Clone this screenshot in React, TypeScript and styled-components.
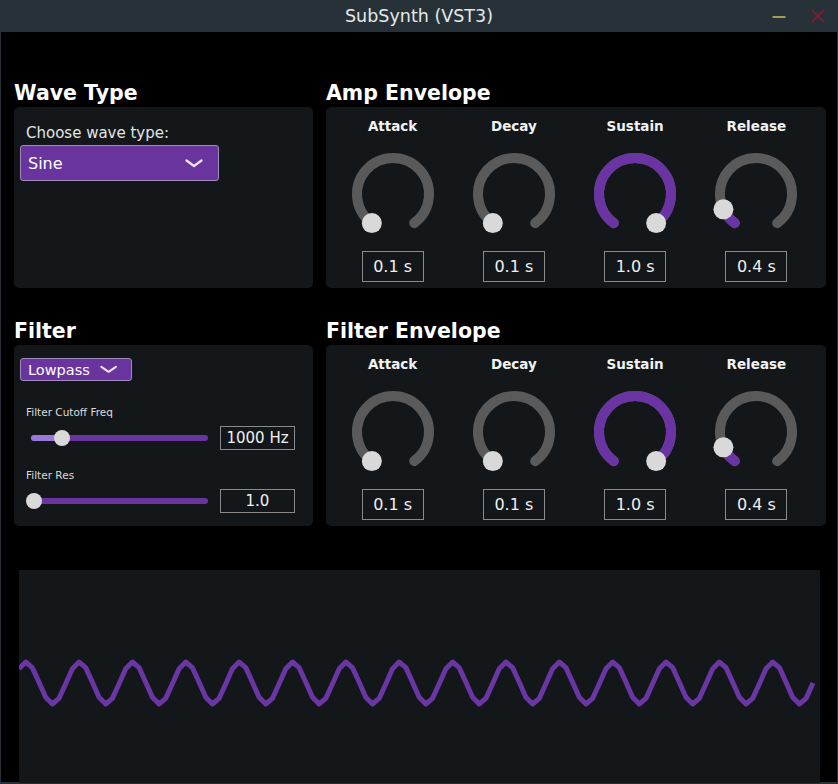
import styled, {createGlobalStyle} from "styled-components";

const GlobalStyle = createGlobalStyle`
  html, body {
    margin: 0;
    padding: 0;
    background: #000;
  }
  * {
    box-sizing: border-box;
  }
`;

const PURPLE = '#6a349f';
const FONT = `"DejaVu Sans", "Liberation Sans", sans-serif`;

const Window = styled.div`
  width: 838px;
  height: 784px;
  display: flex;
  flex-direction: column;
  background: #000;
  border: solid #263238;
  border-width: 0 1px 2px 1px;
  font-family: ${FONT};
  color: #eee;
`;

const TitleBar = styled.div`
  height: 32px;
  flex: none;
  margin: 0 -1px;
  background: #263238;
  display: flex;
  align-items: center;
  justify-content: center;
  position: relative;
`;

const TitleText = styled.span`
  font-size: 17.5px;
  color: #e6e8e9;
  letter-spacing: 0;
`;

const WindowButtons = styled.div`
  position: absolute;
  right: 13px;
  top: 0;
  height: 32px;
  display: flex;
  align-items: center;
  gap: 25px;
`;

const Content = styled.div`
  flex: 1;
  padding: 49px 0 0 13px;
  display: flex;
  flex-direction: column;
`;

const Grid = styled.div`
  display: grid;
  grid-template-columns: 299px 500px;
  column-gap: 13px;
  row-gap: 31px;
`;

const Section = styled.section`
  display: flex;
  flex-direction: column;
`;

const SectionTitle = styled.h2`
  margin: 0 0 2px 0;
  font-size: 20.5px;
  line-height: 24px;
  font-weight: bold;
  color: #fff;
`;

const Panel = styled.div`
  flex: 1;
  background: #131719;
  border-radius: 5px;
`;

const WavePanel = styled(Panel)`
  padding: 17px 6px 0 6px;
`;

const ChooseLabel = styled.div`
  font-size: 15px;
  line-height: 18px;
  padding-left: 6px;
  margin-bottom: 3px;
  color: #e4e4e4;
`;

const Dropdown = styled.div<{ $wide?: boolean }>`
  display: flex;
  align-items: center;
  justify-content: ${(p) => (p.$wide ? 'space-between' : 'flex-start')};
  gap: 10px;
  width: ${(p) => (p.$wide ? '199px' : '112px')};
  height: ${(p) => (p.$wide ? '36px' : '23px')};
  padding: ${(p) => (p.$wide ? '1px 15px 0 7px' : '0 14px 0 7px')};
  background: ${PURPLE};
  border: 1px solid #a08bb9;
  border-radius: 3px;
  font-size: ${(p) => (p.$wide ? '16px' : '14.5px')};
  color: #fff;
`;

const EnvPanel = styled(Panel)`
  display: grid;
  grid-template-columns: repeat(4, 1fr);
  padding: 11px 9px 6px 6px;
`;

const KnobColumn = styled.div`
  display: flex;
  flex-direction: column;
  align-items: center;
`;

const KnobLabel = styled.div`
  font-size: 13.5px;
  line-height: 16px;
  font-weight: bold;
  color: #f2f2f2;
  margin-bottom: 10px;
`;

const KnobValue = styled.div`
  margin-top: 7px;
`;

const ValueBox = styled.div<{ $w: number; $h: number }>`
  width: ${(p) => p.$w}px;
  height: ${(p) => p.$h}px;
  border: 1px solid #8a8a8a;
  display: flex;
  align-items: center;
  justify-content: center;
  font-size: ${(p) => (p.$h > 28 ? '16px' : '15px')};
  color: #f0f0f0;
  flex: none;
`;

const FilterPanel = styled(Panel)`
  padding: 13px 18px 12px 6px;
  display: flex;
  flex-direction: column;
`;

const SliderLabel = styled.div<{ $top: number }>`
  margin-top: ${(p) => p.$top}px;
  padding-left: 6px;
  font-size: 10.5px;
  line-height: 13px;
  color: #dcdcdc;
  margin-bottom: 7px;
`;

const SliderRow = styled.div`
  display: flex;
  align-items: center;
  gap: 7px;
  padding-left: 6px;
`;

const SliderTrack = styled.div`
  position: relative;
  width: 187px;
  height: 24px;
  display: flex;
  align-items: center;
  padding: 0 5px;
`;

const TrackBar = styled.div`
  position: relative;
  flex: 1;
  height: 6px;
  border-radius: 3px;
  background: ${PURPLE};
`;

const TrackFill = styled.div`
  position: absolute;
  left: 0;
  top: 0;
  bottom: 0;
  border-radius: 3px;
  background: #9a78d8;
`;

const Thumb = styled.div`
  position: absolute;
  top: 50%;
  width: 16px;
  height: 16px;
  margin: -8px 0 0 -8px;
  border-radius: 50%;
  background: #d9d9d9;
`;

const Scope = styled.div`
  margin: 44px 0 0 5px;
  width: 801px;
  height: 213px;
  background: #131719;
`;

const START = -0.8 * Math.PI;
const END = 0.8 * Math.PI;

const pt = (a: number, r: number) => [50 + r * Math.sin(a), 50 - r * Math.cos(a)];

const arcPath = (a: number, b: number, r: number) => {
  const [x1, y1] = pt(a, r);
  const [x2, y2] = pt(b, r);
  const large = b - a > Math.PI ? 1 : 0;
  return `M ${x1} ${y1} A ${r} ${r} 0 ${large} 1 ${x2} ${y2}`;
};

function Knob({ label, value, frac }: { label: string; value: string; frac: number }) {
  const angle = START + (END - START) * frac;
  const [tx, ty] = pt(angle, 36);
  return (
    <KnobColumn>
      <KnobLabel>{label}</KnobLabel>
      <svg width="100" height="100" viewBox="0 0 100 100">
        <path d={arcPath(START, END, 36)} stroke="#5a5a5a" strokeWidth="10" fill="none" strokeLinecap="round" />
        {frac > 0.01 && (
          <path d={arcPath(START, angle, 36)} stroke="#6b34a3" strokeWidth="10" fill="none" strokeLinecap="round" />
        )}
        <circle cx={tx} cy={ty} r="10" fill="#d9d9d9" />
      </svg>
      <KnobValue>
        <ValueBox $w={62} $h={31}>{value}</ValueBox>
      </KnobValue>
    </KnobColumn>
  );
}

function Chevron({ w }: { w: number }) {
  return (
    <svg width={w} height="9" viewBox={`0 0 ${w} 9`}>
      <polyline points={`1.5,1.5 ${w / 2},7 ${w - 1.5},1.5`} stroke="#ece3f7" strokeWidth="2.3" fill="none" strokeLinecap="round" strokeLinejoin="round" />
    </svg>
  );
}

function Slider({ frac }: { frac: number }) {
  return (
    <SliderTrack>
      <TrackBar>
        <TrackFill style={{ width: `calc(${frac * 100}% + 3px)` }} />
        <Thumb style={{ left: `calc(3px + ${frac} * (100% - 6px))` }} />
      </TrackBar>
    </SliderTrack>
  );
}

const envelope = [
  { label: 'Attack', value: '0.1 s', frac: 0 },
  { label: 'Decay', value: '0.1 s', frac: 0 },
  { label: 'Sustain', value: '1.0 s', frac: 1 },
  { label: 'Release', value: '0.4 s', frac: 0.1 },
];

function SineWave() {
  const period = 53.36;
  const pts: string[] = [];
  for (let x = 0; x <= 794; x += period / 8) {
    const y = 113 - 21 * Math.cos((2 * Math.PI * (x - 7)) / period);
    pts.push(`${x.toFixed(1)},${y.toFixed(1)}`);
  }
  pts.push(`794,${(113 - 21 * Math.cos((2 * Math.PI * (794 - 7)) / period)).toFixed(1)}`);
  return (
    <svg width="801" height="213" viewBox="0 0 801 213">
      <polyline points={pts.join(' ')} stroke="#6a36a3" strokeWidth="5" fill="none" strokeLinejoin="round" />
    </svg>
  );
}

export default function App() {
  return (
    <>
      <GlobalStyle />
      <Window>
        <TitleBar>
          <TitleText>SubSynth (VST3)</TitleText>
          <WindowButtons>
            <svg width="14" height="14" viewBox="0 0 14 14">
              <line x1="0.5" y1="8" x2="13.5" y2="8" stroke="#a39c58" strokeWidth="2" />
            </svg>
            <svg width="14" height="14" viewBox="0 0 14 14">
              <path d="M1 1 L13 13 M13 1 L1 13" stroke="#7a2030" strokeWidth="1.8" />
            </svg>
          </WindowButtons>
        </TitleBar>
        <Content>
          <Grid>
            <Section>
              <SectionTitle>Wave Type</SectionTitle>
              <WavePanel>
                <ChooseLabel>Choose wave type:</ChooseLabel>
                <Dropdown $wide>
                  <span>Sine</span>
                  <Chevron w={18} />
                </Dropdown>
              </WavePanel>
            </Section>
            <Section>
              <SectionTitle>Amp Envelope</SectionTitle>
              <EnvPanel>
                {envelope.map((k) => (
                  <Knob key={k.label} {...k} />
                ))}
              </EnvPanel>
            </Section>
            <Section>
              <SectionTitle>Filter</SectionTitle>
              <FilterPanel>
                <Dropdown>
                  <span>Lowpass</span>
                  <Chevron w={19} />
                </Dropdown>
                <SliderLabel $top={25}>Filter Cutoff Freq</SliderLabel>
                <SliderRow>
                  <Slider frac={0.164} />
                  <ValueBox $w={75} $h={24}>1000 Hz</ValueBox>
                </SliderRow>
                <SliderLabel $top={19}>Filter Res</SliderLabel>
                <SliderRow>
                  <Slider frac={0} />
                  <ValueBox $w={75} $h={24}>1.0</ValueBox>
                </SliderRow>
              </FilterPanel>
            </Section>
            <Section>
              <SectionTitle>Filter Envelope</SectionTitle>
              <EnvPanel>
                {envelope.map((k) => (
                  <Knob key={k.label} {...k} />
                ))}
              </EnvPanel>
            </Section>
          </Grid>
          <Scope>
            <SineWave />
          </Scope>
        </Content>
      </Window>
    </>
  );
}
